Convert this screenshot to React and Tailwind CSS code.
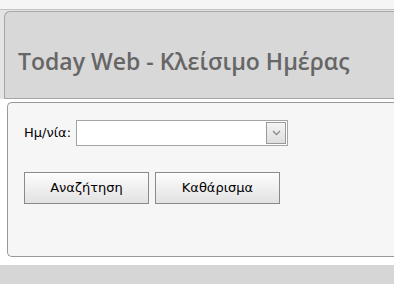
import React from 'react'

const App = () => {
  return (
    <div className="w-[394px] h-[284px] overflow-hidden bg-[#d6d6d6]" style={{ fontFamily: '"DejaVu Sans", sans-serif' }}>
      <div className="h-[9px] bg-[#f5f5f5]" />
      <div className="border-t border-[#c4c4c4] bg-white">
        <div className="pt-[1px] pl-[4px] bg-[#e4e4e4]">
          <div className="h-[88px] bg-[#d8d8d8] border-t border-l border-b border-[#a6a6a6] rounded-tl-[6px] flex items-end pl-[13px] pb-[25px]">
            <h1 className="text-[23px] font-semibold text-[#666666] leading-none" style={{ fontFamily: '"Open Sans", sans-serif' }}>
              Today Web - Κλείσιμο Ημέρας
            </h1>
          </div>
        </div>
        <div className="pt-[3px] pl-[7px] pb-[8px]">
          <div className="h-[155px] bg-[#f6f6f6] border-t border-l border-b border-[#999999] rounded-l-[5px] pl-[16px] pt-[17px]">
            <div className="flex items-center gap-[5px] text-[13px] text-black">
              <span>Ημ/νία:</span>
              <div className="w-[212px] h-[26px] bg-white border border-[#a5a5a5] flex justify-end items-center pr-[1px]">
                <div className="w-[20px] h-[22px] border border-[#9a9a9a] bg-gradient-to-b from-[#f4f4f4] to-[#dedede] flex items-center justify-center">
                  <svg width="9" height="6" viewBox="0 0 9 6" fill="none">
                    <path d="M1 1l3.5 3.5L8 1" stroke="#8a8a8a" strokeWidth="1.3" />
                  </svg>
                </div>
              </div>
            </div>
            <div className="flex gap-[6px] mt-[26px]">
              <button className="w-[125px] h-[32px] border border-[#8a8a8a] bg-gradient-to-b from-[#fdfdfd] to-[#e2e2e2] text-[13px] text-black">
                Αναζήτηση
              </button>
              <button className="w-[125px] h-[32px] border border-[#8a8a8a] bg-gradient-to-b from-[#fdfdfd] to-[#e2e2e2] text-[13px] text-black">
                Καθάρισμα
              </button>
            </div>
          </div>
        </div>
      </div>
    </div>
  )
}

export default App
